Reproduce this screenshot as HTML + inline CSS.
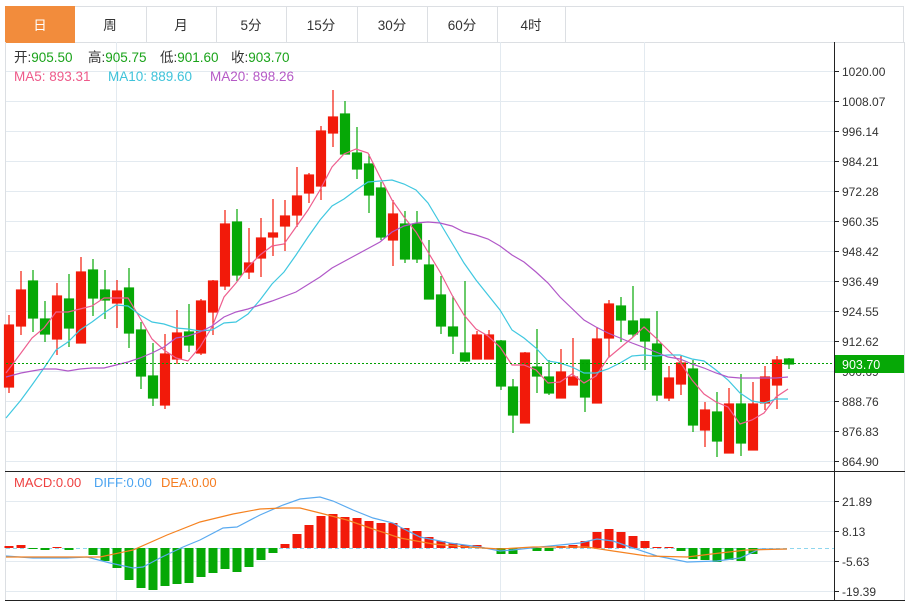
<!DOCTYPE html>
<html><head><meta charset="utf-8"><style>
body{margin:0;background:#fff;width:913px;height:603px;overflow:hidden;font-family:"Liberation Sans","Noto Sans CJK SC",sans-serif}
svg{position:absolute;left:0;top:0}
</style></head><body>
<svg width="913" height="603" viewBox="0 0 913 603" xmlns="http://www.w3.org/2000/svg" font-family="Liberation Sans, Noto Sans CJK SC, sans-serif">
<rect x="5.5" y="6.5" width="898" height="36" fill="#fff" stroke="#dcdfe3"/>
<rect x="5" y="6" width="70" height="37" fill="#f28c3c"/>
<g stroke="#dcdfe3"><line x1="146.5" y1="6" x2="146.5" y2="42"/><line x1="216.5" y1="6" x2="216.5" y2="42"/><line x1="286.5" y1="6" x2="286.5" y2="42"/><line x1="357.5" y1="6" x2="357.5" y2="42"/><line x1="427.5" y1="6" x2="427.5" y2="42"/><line x1="497.5" y1="6" x2="497.5" y2="42"/><line x1="565.5" y1="6" x2="565.5" y2="42"/></g>
<g font-size="13.5" text-anchor="middle" fill="#333"><text x="40" y="30" fill="#fff">日</text><text x="110" y="30">周</text><text x="181" y="30">月</text><text x="251" y="30">5分</text><text x="321" y="30">15分</text><text x="392" y="30">30分</text><text x="462" y="30">60分</text><text x="531" y="30">4时</text></g>
<line x1="5.5" y1="42" x2="5.5" y2="600" stroke="#dcdfe3"/>
<line x1="904.5" y1="42" x2="904.5" y2="600" stroke="#dcdfe3"/>
<g stroke="#e3eaf0"><line x1="6" y1="71.5" x2="834" y2="71.5"/><line x1="6" y1="101.5" x2="834" y2="101.5"/><line x1="6" y1="131.5" x2="834" y2="131.5"/><line x1="6" y1="161.5" x2="834" y2="161.5"/><line x1="6" y1="191.5" x2="834" y2="191.5"/><line x1="6" y1="221.5" x2="834" y2="221.5"/><line x1="6" y1="251.5" x2="834" y2="251.5"/><line x1="6" y1="281.5" x2="834" y2="281.5"/><line x1="6" y1="311.5" x2="834" y2="311.5"/><line x1="6" y1="341.5" x2="834" y2="341.5"/><line x1="6" y1="371.5" x2="834" y2="371.5"/><line x1="6" y1="401.5" x2="834" y2="401.5"/><line x1="6" y1="431.5" x2="834" y2="431.5"/><line x1="6" y1="461.5" x2="834" y2="461.5"/>
<line x1="6" y1="501.5" x2="834" y2="501.5"/><line x1="6" y1="531.5" x2="834" y2="531.5"/><line x1="6" y1="561.5" x2="834" y2="561.5"/><line x1="6" y1="591.5" x2="834" y2="591.5"/>
<line x1="116.5" y1="42" x2="116.5" y2="600"/><line x1="500.5" y1="42" x2="500.5" y2="600"/><line x1="644.5" y1="42" x2="644.5" y2="600"/></g>
<line x1="834.5" y1="42" x2="834.5" y2="600" stroke="#222"/>
<line x1="5" y1="471.5" x2="905" y2="471.5" stroke="#222"/>
<line x1="5" y1="600.5" x2="905" y2="600.5" stroke="#222"/>
<g stroke="#222"><line x1="834" y1="71.5" x2="839" y2="71.5"/><line x1="834" y1="101.5" x2="839" y2="101.5"/><line x1="834" y1="131.5" x2="839" y2="131.5"/><line x1="834" y1="161.5" x2="839" y2="161.5"/><line x1="834" y1="191.5" x2="839" y2="191.5"/><line x1="834" y1="221.5" x2="839" y2="221.5"/><line x1="834" y1="251.5" x2="839" y2="251.5"/><line x1="834" y1="281.5" x2="839" y2="281.5"/><line x1="834" y1="311.5" x2="839" y2="311.5"/><line x1="834" y1="341.5" x2="839" y2="341.5"/><line x1="834" y1="371.5" x2="839" y2="371.5"/><line x1="834" y1="401.5" x2="839" y2="401.5"/><line x1="834" y1="431.5" x2="839" y2="431.5"/><line x1="834" y1="461.5" x2="839" y2="461.5"/><line x1="834" y1="501.5" x2="839" y2="501.5"/><line x1="834" y1="531.5" x2="839" y2="531.5"/><line x1="834" y1="561.5" x2="839" y2="561.5"/><line x1="834" y1="591.5" x2="839" y2="591.5"/></g>
<g font-size="12" fill="#333"><text x="842" y="76">1020.00</text><text x="842" y="106">1008.07</text><text x="842" y="136">996.14</text><text x="842" y="166">984.21</text><text x="842" y="196">972.28</text><text x="842" y="226">960.35</text><text x="842" y="256">948.42</text><text x="842" y="286">936.49</text><text x="842" y="316">924.55</text><text x="842" y="346">912.62</text><text x="842" y="376">900.69</text><text x="842" y="406">888.76</text><text x="842" y="436">876.83</text><text x="842" y="466">864.90</text><text x="842" y="506">21.89</text><text x="842" y="536">8.13</text><text x="842" y="566">-5.63</text><text x="842" y="596">-19.39</text></g>
<g font-size="13.5">
<text x="14" y="62" fill="#333">开:<tspan fill="#1aa31a">905.50</tspan></text>
<text x="88" y="62" fill="#333">高:<tspan fill="#1aa31a">905.75</tspan></text>
<text x="160" y="62" fill="#333">低:<tspan fill="#1aa31a">901.60</tspan></text>
<text x="231" y="62" fill="#333">收:<tspan fill="#1aa31a">903.70</tspan></text>
<text x="14" y="81" fill="#ee5a8a">MA5: 893.31</text><text x="108" y="81" fill="#3fc3da">MA10: 889.60</text><text x="210" y="81" fill="#b55ac6">MA20: 898.26</text>
<text x="14" y="487" fill="#ee4040" font-size="13">MACD:0.00</text><text x="94" y="487" fill="#4aa3f0" font-size="13">DIFF:0.00</text><text x="161" y="487" fill="#f57c20" font-size="13">DEA:0.00</text></g>
<g stroke-width="1.2">
<g stroke="#f21a0a" fill="#f21a0a">
<line x1="9" y1="315" x2="9" y2="393"/><rect x="4.5" y="325" width="9" height="62"/>
<line x1="21" y1="271" x2="21" y2="335"/><rect x="16.5" y="290" width="9" height="36"/>
<line x1="57" y1="283" x2="57" y2="355"/><rect x="52.5" y="296" width="9" height="43"/>
<line x1="81" y1="257" x2="81" y2="343"/><rect x="76.5" y="272" width="9" height="71"/>
<line x1="117" y1="280" x2="117" y2="328"/><rect x="112.5" y="291" width="9" height="12"/>
<line x1="165" y1="334" x2="165" y2="409"/><rect x="160.5" y="354" width="9" height="51"/>
<line x1="177" y1="310" x2="177" y2="364"/><rect x="172.5" y="333" width="9" height="26"/>
<line x1="201" y1="299" x2="201" y2="355"/><rect x="196.5" y="301" width="9" height="52"/>
<line x1="213" y1="280" x2="213" y2="335"/><rect x="208.5" y="281" width="9" height="31"/>
<line x1="225" y1="210" x2="225" y2="290"/><rect x="220.5" y="224" width="9" height="62"/>
<line x1="249" y1="228" x2="249" y2="279"/><rect x="244.5" y="263" width="9" height="9"/>
<line x1="261" y1="218" x2="261" y2="277"/><rect x="256.5" y="238" width="9" height="20"/>
<line x1="273" y1="199" x2="273" y2="256"/><rect x="268.5" y="233" width="9" height="4"/>
<line x1="285" y1="200" x2="285" y2="251"/><rect x="280.5" y="216" width="9" height="10"/>
<line x1="297" y1="167" x2="297" y2="227"/><rect x="292.5" y="196" width="9" height="19"/>
<line x1="309" y1="173" x2="309" y2="203"/><rect x="304.5" y="175" width="9" height="18"/>
<line x1="321" y1="126" x2="321" y2="200"/><rect x="316.5" y="131" width="9" height="55"/>
<line x1="333" y1="90" x2="333" y2="147"/><rect x="328.5" y="117" width="9" height="16"/>
<line x1="393" y1="200" x2="393" y2="266"/><rect x="388.5" y="214" width="9" height="26"/>
<line x1="477" y1="331" x2="477" y2="359"/><rect x="472.5" y="335" width="9" height="24"/>
<line x1="489" y1="330" x2="489" y2="359"/><rect x="484.5" y="335" width="9" height="24"/>
<line x1="525" y1="352" x2="525" y2="423"/><rect x="520.5" y="353" width="9" height="70"/>
<line x1="561" y1="349" x2="561" y2="398"/><rect x="556.5" y="372" width="9" height="26"/>
<line x1="573" y1="338" x2="573" y2="385"/><rect x="568.5" y="377" width="9" height="8"/>
<line x1="597" y1="327" x2="597" y2="403"/><rect x="592.5" y="339" width="9" height="64"/>
<line x1="609" y1="300" x2="609" y2="357"/><rect x="604.5" y="304" width="9" height="34"/>
<line x1="669" y1="366" x2="669" y2="401"/><rect x="664.5" y="378" width="9" height="20"/>
<line x1="681" y1="356" x2="681" y2="395"/><rect x="676.5" y="363" width="9" height="21"/>
<line x1="705" y1="402" x2="705" y2="447"/><rect x="700.5" y="410" width="9" height="20"/>
<line x1="729" y1="388" x2="729" y2="453"/><rect x="724.5" y="404" width="9" height="49"/>
<line x1="753" y1="382" x2="753" y2="450"/><rect x="748.5" y="404" width="9" height="46"/>
<line x1="765" y1="366" x2="765" y2="410"/><rect x="760.5" y="377" width="9" height="26"/>
<line x1="777" y1="356" x2="777" y2="409"/><rect x="772.5" y="360" width="9" height="25"/>
</g>
<g stroke="#06a806" fill="#06a806">
<line x1="33" y1="270" x2="33" y2="332"/><rect x="28.5" y="281" width="9" height="37"/>
<line x1="45" y1="301" x2="45" y2="342"/><rect x="40.5" y="319" width="9" height="15"/>
<line x1="69" y1="274" x2="69" y2="347"/><rect x="64.5" y="299" width="9" height="29"/>
<line x1="93" y1="259" x2="93" y2="316"/><rect x="88.5" y="270" width="9" height="28"/>
<line x1="105" y1="270" x2="105" y2="319"/><rect x="100.5" y="290" width="9" height="10"/>
<line x1="129" y1="268" x2="129" y2="348"/><rect x="124.5" y="288" width="9" height="45"/>
<line x1="141" y1="322" x2="141" y2="389"/><rect x="136.5" y="330" width="9" height="46"/>
<line x1="153" y1="343" x2="153" y2="406"/><rect x="148.5" y="376" width="9" height="22"/>
<line x1="189" y1="304" x2="189" y2="352"/><rect x="184.5" y="332" width="9" height="13"/>
<line x1="237" y1="209" x2="237" y2="281"/><rect x="232.5" y="222" width="9" height="53"/>
<line x1="345" y1="101" x2="345" y2="154"/><rect x="340.5" y="114" width="9" height="40"/>
<line x1="357" y1="127" x2="357" y2="179"/><rect x="352.5" y="153" width="9" height="16"/>
<line x1="369" y1="154" x2="369" y2="213"/><rect x="364.5" y="164" width="9" height="31"/>
<line x1="381" y1="182" x2="381" y2="240"/><rect x="376.5" y="188" width="9" height="49"/>
<line x1="405" y1="211" x2="405" y2="263"/><rect x="400.5" y="224" width="9" height="35"/>
<line x1="417" y1="211" x2="417" y2="263"/><rect x="412.5" y="224" width="9" height="35"/>
<line x1="429" y1="240" x2="429" y2="299"/><rect x="424.5" y="265" width="9" height="34"/>
<line x1="441" y1="276" x2="441" y2="334"/><rect x="436.5" y="295" width="9" height="31"/>
<line x1="453" y1="296" x2="453" y2="354"/><rect x="448.5" y="327" width="9" height="9"/>
<line x1="465" y1="281" x2="465" y2="362"/><rect x="460.5" y="353" width="9" height="8"/>
<line x1="501" y1="340" x2="501" y2="390"/><rect x="496.5" y="341" width="9" height="45"/>
<line x1="513" y1="379" x2="513" y2="433"/><rect x="508.5" y="387" width="9" height="28"/>
<line x1="537" y1="329" x2="537" y2="393"/><rect x="532.5" y="367" width="9" height="9"/>
<line x1="549" y1="360" x2="549" y2="395"/><rect x="544.5" y="377" width="9" height="16"/>
<line x1="585" y1="360" x2="585" y2="412"/><rect x="580.5" y="360" width="9" height="37"/>
<line x1="621" y1="297" x2="621" y2="342"/><rect x="616.5" y="306" width="9" height="14"/>
<line x1="633" y1="286" x2="633" y2="337"/><rect x="628.5" y="321" width="9" height="13"/>
<line x1="645" y1="319" x2="645" y2="370"/><rect x="640.5" y="319" width="9" height="22"/>
<line x1="657" y1="311" x2="657" y2="401"/><rect x="652.5" y="344" width="9" height="51"/>
<line x1="693" y1="360" x2="693" y2="432"/><rect x="688.5" y="369" width="9" height="56"/>
<line x1="717" y1="392" x2="717" y2="457"/><rect x="712.5" y="412" width="9" height="29"/>
<line x1="741" y1="374" x2="741" y2="456"/><rect x="736.5" y="404" width="9" height="39"/>
<line x1="789" y1="358" x2="789" y2="369"/><rect x="784.5" y="359" width="9" height="5"/>
</g></g>
<g fill="none" stroke-width="1.2">
<polyline stroke="#ee5f8f" points="6,373 21,353 32,338 44,328 56,312 68,312 80,309 92,306 104,298 116,298 128,298 140,318 152,339 164,350 176,358 188,361 200,347 212,327 224,297 236,283 248,267 260,255 272,246 284,244 296,227 308,210 320,190 332,167 344,154 356,149 368,153 380,177 392,200 404,217 416,232 428,252 440,272 452,295 464,315 476,329 488,336 500,347 512,365 524,365 536,370 548,383 560,382 572,374 584,383 596,376 608,358 620,348 632,338 644,327 656,338 668,350 680,362 692,380 704,394 716,402 728,407 740,424 752,420 764,413 776,397 788,389"/>
<polyline stroke="#40c8e0" points="6,418 21,400 32,385 44,368 56,350 68,342 80,330 92,322 104,313 116,305 128,306 140,315 152,322 164,324 176,328 188,329 200,331 212,330 224,323 236,322 248,314 260,300 272,284 284,272 296,255 308,237 320,220 332,206 344,199 356,190 368,182 380,181 392,180 404,184 416,190 428,203 440,223 452,243 464,263 476,280 488,295 500,310 512,330 524,338 536,348 548,361 560,363 572,367 584,373 596,373 608,369 620,363 632,356 644,355 656,356 668,355 680,355 692,359 704,361 716,370 728,380 740,393 752,401 764,403 776,399 788,399"/>
<polyline stroke="#b158c8" points="6,377 21,373 32,371 44,369 56,369 68,371 80,369 92,368 104,368 116,365 128,362 140,358 152,353 164,347 176,338 188,336 200,332 212,326 224,317 236,312 248,309 260,305 272,301 296,292 320,277 332,268 356,255 380,242 392,232 404,226 416,223 428,222 440,223 452,226 464,232 476,235 488,239 500,246 512,255 524,262 536,272 548,283 560,297 584,320 596,327 608,333 632,343 656,352 668,357 680,359 692,364 704,368 716,373 728,377 740,378 776,378 788,377"/>
</g>
<line x1="6" y1="363.5" x2="834" y2="363.5" stroke="#00a000" stroke-dasharray="2,2"/>
<rect x="835" y="355" width="69" height="18" fill="#06a806"/>
<text x="842" y="369" font-size="12.5" fill="#fff">903.70</text>
<line x1="6" y1="548.5" x2="834" y2="548.5" stroke="#8fd6ee" stroke-dasharray="4,3"/>
<g fill="#f21a0a"><rect x="4.5" y="546" width="9" height="2"/><rect x="16.5" y="545" width="9" height="3"/><rect x="52.5" y="547" width="9" height="1"/>
<rect x="280.5" y="544" width="9" height="4"/><rect x="292.5" y="534" width="9" height="14"/><rect x="304.5" y="525" width="9" height="23"/><rect x="316.5" y="516" width="9" height="32"/><rect x="328.5" y="514" width="9" height="34"/><rect x="340.5" y="517" width="9" height="31"/><rect x="352.5" y="518" width="9" height="30"/><rect x="364.5" y="521" width="9" height="27"/><rect x="376.5" y="523" width="9" height="25"/><rect x="388.5" y="523" width="9" height="25"/><rect x="400.5" y="528" width="9" height="20"/><rect x="412.5" y="531" width="9" height="17"/><rect x="424.5" y="537" width="9" height="11"/><rect x="436.5" y="541" width="9" height="7"/><rect x="448.5" y="543" width="9" height="5"/><rect x="460.5" y="545" width="9" height="3"/><rect x="472.5" y="545" width="9" height="3"/>
<rect x="556.5" y="546" width="9" height="2"/><rect x="568.5" y="545" width="9" height="3"/><rect x="580.5" y="541" width="9" height="7"/><rect x="592.5" y="532" width="9" height="16"/><rect x="604.5" y="529" width="9" height="19"/><rect x="616.5" y="532" width="9" height="16"/><rect x="628.5" y="536" width="9" height="12"/><rect x="640.5" y="541" width="9" height="7"/><rect x="652.5" y="547" width="9" height="1"/><rect x="664.5" y="547" width="9" height="1"/></g>
<g fill="#06a806"><rect x="28.5" y="548" width="9" height="1"/><rect x="40.5" y="548" width="9" height="2"/><rect x="64.5" y="548" width="9" height="2"/>
<rect x="88.5" y="548" width="9" height="7"/><rect x="100.5" y="548" width="9" height="13"/><rect x="112.5" y="548" width="9" height="20"/><rect x="124.5" y="548" width="9" height="32"/><rect x="136.5" y="548" width="9" height="40"/><rect x="148.5" y="548" width="9" height="42"/><rect x="160.5" y="548" width="9" height="38"/><rect x="172.5" y="548" width="9" height="36"/><rect x="184.5" y="548" width="9" height="35"/><rect x="196.5" y="548" width="9" height="29"/><rect x="208.5" y="548" width="9" height="25"/><rect x="220.5" y="548" width="9" height="21"/><rect x="232.5" y="548" width="9" height="24"/><rect x="244.5" y="548" width="9" height="19"/><rect x="256.5" y="548" width="9" height="12"/><rect x="268.5" y="548" width="9" height="5"/>
<rect x="496.5" y="548" width="9" height="6"/><rect x="508.5" y="548" width="9" height="6"/><rect x="532.5" y="548" width="9" height="3"/><rect x="544.5" y="548" width="9" height="3"/>
<rect x="676.5" y="548" width="9" height="3"/><rect x="688.5" y="548" width="9" height="11"/><rect x="700.5" y="548" width="9" height="12"/><rect x="712.5" y="548" width="9" height="14"/><rect x="724.5" y="548" width="9" height="12"/><rect x="736.5" y="548" width="9" height="13"/><rect x="748.5" y="548" width="9" height="6"/></g>
<g fill="none" stroke-width="1.2">
<polyline stroke="#5aaaf0" points="6,556 33,558 67,558 87,557 110,563 133,568 143,567 160,558 183,547 200,540 223,528 237,527 260,515 283,505 300,499 320,497 333,501 353,510 373,518 393,523 400,527 420,537 450,543 480,547 500,551 513,550 540,547 580,543 597,539 613,541 633,548 657,556 687,562 717,561 740,558 760,549 787,549"/>
<polyline stroke="#f58220" points="6,557 100,557 133,550 167,535 200,522 233,514 260,509 283,508 300,508 320,513 347,520 373,529 400,538 433,544 467,547 500,549 533,547 587,547 613,551 647,556 687,557 720,553 747,550 787,549"/>
</g>
</svg>
</body></html>
